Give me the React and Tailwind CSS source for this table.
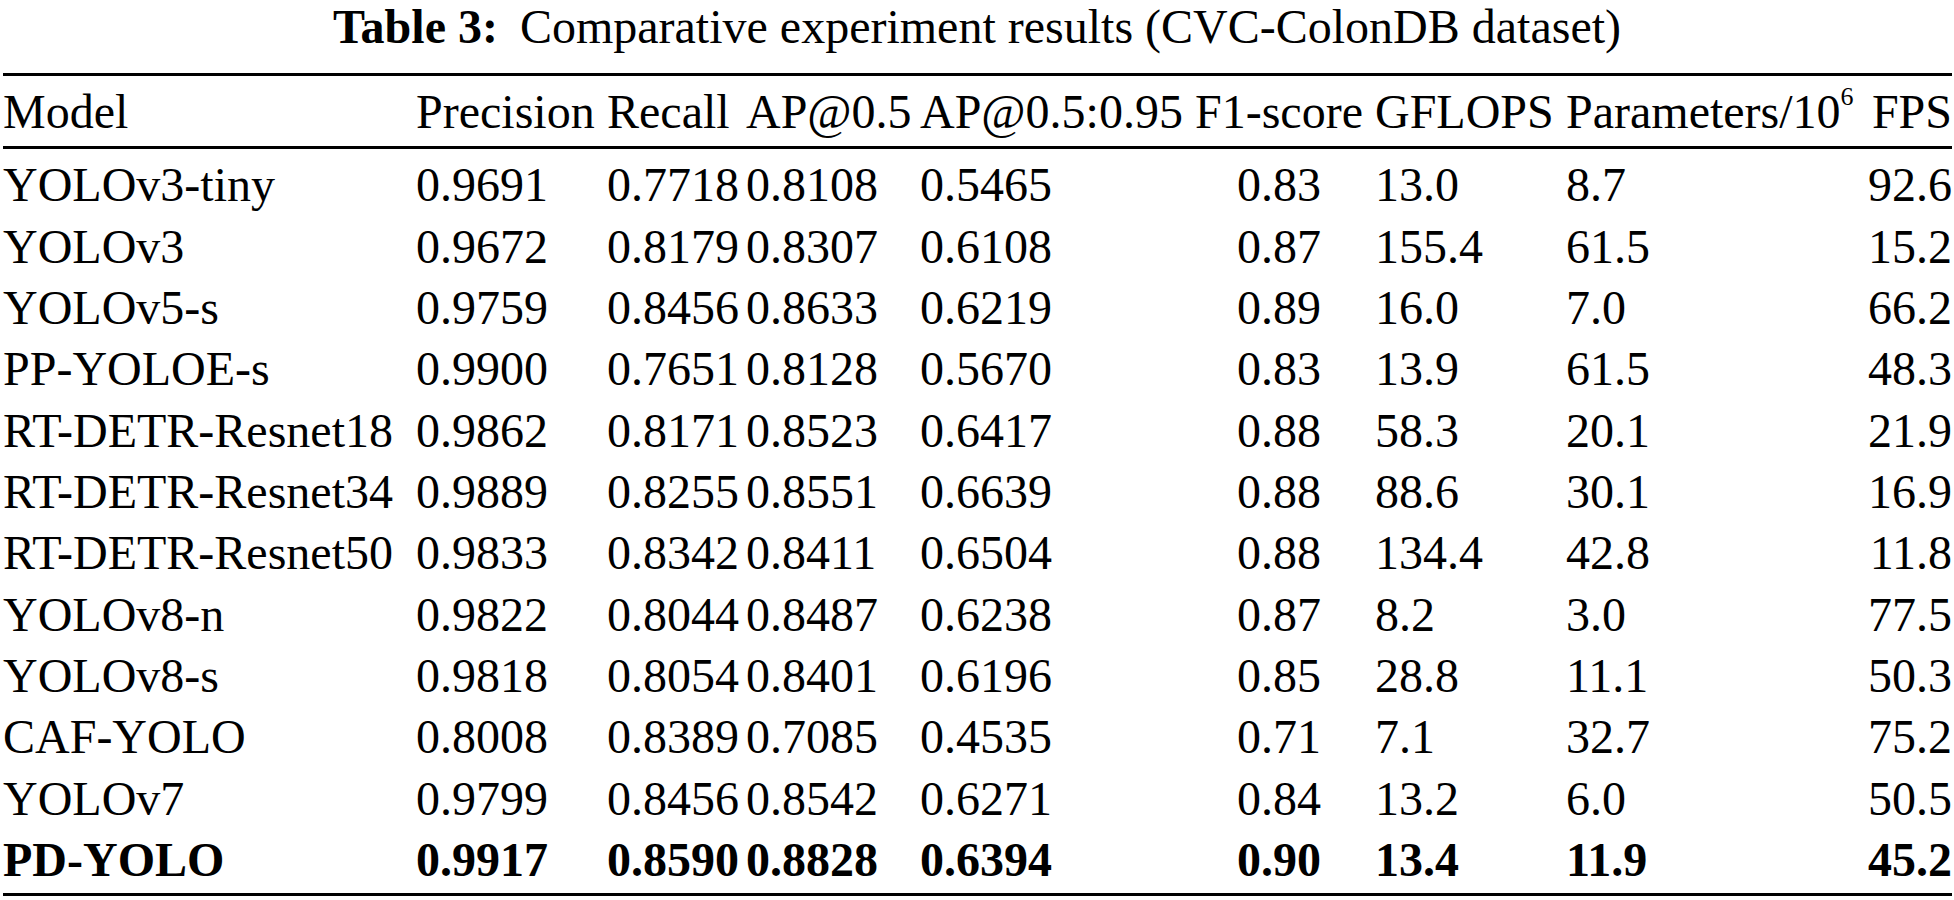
import React from 'react'

const COLS = [
  { key: 'model', label: 'Model', w: 'w-[413px]', align: 'text-left' },
  { key: 'precision', label: 'Precision', w: 'w-[191px]', align: 'text-left' },
  { key: 'recall', label: 'Recall', w: 'w-[139px]', align: 'text-left' },
  { key: 'ap50', label: 'AP@0.5', w: 'w-[174px]', align: 'text-left' },
  { key: 'ap5095', label: 'AP@0.5:0.95', w: 'w-[275px]', align: 'text-left' },
  { key: 'f1', label: 'F1-score', w: 'w-[180px]', align: 'text-center pr-[12px]' },
  { key: 'gflops', label: 'GFLOPS', w: 'w-[191px]', align: 'text-left' },
  { key: 'params', label: 'Parameters/10', w: 'w-[301px]', align: 'text-left' },
  { key: 'fps', label: 'FPS', w: 'w-[85px]', align: 'text-right' },
]

const ROWS = [
  ['YOLOv3-tiny', '0.9691', '0.7718', '0.8108', '0.5465', '0.83', '13.0', '8.7', '92.6'],
  ['YOLOv3', '0.9672', '0.8179', '0.8307', '0.6108', '0.87', '155.4', '61.5', '15.2'],
  ['YOLOv5-s', '0.9759', '0.8456', '0.8633', '0.6219', '0.89', '16.0', '7.0', '66.2'],
  ['PP-YOLOE-s', '0.9900', '0.7651', '0.8128', '0.5670', '0.83', '13.9', '61.5', '48.3'],
  ['RT-DETR-Resnet18', '0.9862', '0.8171', '0.8523', '0.6417', '0.88', '58.3', '20.1', '21.9'],
  ['RT-DETR-Resnet34', '0.9889', '0.8255', '0.8551', '0.6639', '0.88', '88.6', '30.1', '16.9'],
  ['RT-DETR-Resnet50', '0.9833', '0.8342', '0.8411', '0.6504', '0.88', '134.4', '42.8', '11.8'],
  ['YOLOv8-n', '0.9822', '0.8044', '0.8487', '0.6238', '0.87', '8.2', '3.0', '77.5'],
  ['YOLOv8-s', '0.9818', '0.8054', '0.8401', '0.6196', '0.85', '28.8', '11.1', '50.3'],
  ['CAF-YOLO', '0.8008', '0.8389', '0.7085', '0.4535', '0.71', '7.1', '32.7', '75.2'],
  ['YOLOv7', '0.9799', '0.8456', '0.8542', '0.6271', '0.84', '13.2', '6.0', '50.5'],
  ['PD-YOLO', '0.9917', '0.8590', '0.8828', '0.6394', '0.90', '13.4', '11.9', '45.2'],
]

export default function App() {
  return (
    <div className="w-[1954px] h-[900px] bg-white text-black overflow-hidden font-['Liberation_Serif',serif] text-[48px]">
      <div className="text-center leading-[53px]">
        <span className="font-bold">Table 3:</span>
        <span className="ml-[22px]">Comparative experiment results (CVC-ColonDB dataset)</span>
      </div>

      <div className="mt-[20px] ml-[3px] w-[1949px] border-t-[3px] border-b-[3px] border-black">
        <div className="flex h-[73px] items-center leading-[53px] border-b-[3px] border-black whitespace-nowrap">
          {COLS.map((c) => (
            <div key={c.key} className={`${c.w} shrink-0 ${c.key === 'fps' ? 'text-right' : 'text-left'}`}>
              {c.label}
              {c.key === 'params' && <sup className="text-[26px] top-[-0.85em]">6</sup>}
            </div>
          ))}
        </div>

        <div className="pt-[5px] pb-[3px]">
          {ROWS.map((row) => {
            const bold = row[0] === 'PD-YOLO'
            return (
              <div
                key={row[0]}
                className={`flex h-[61.36px] items-center leading-[53px] whitespace-nowrap ${bold ? 'font-bold' : ''}`}
              >
                {row.map((v, j) => (
                  <div key={j} className={`${COLS[j].w} shrink-0 ${COLS[j].align}`}>
                    {v}
                  </div>
                ))}
              </div>
            )
          })}
        </div>
      </div>
    </div>
  )
}
